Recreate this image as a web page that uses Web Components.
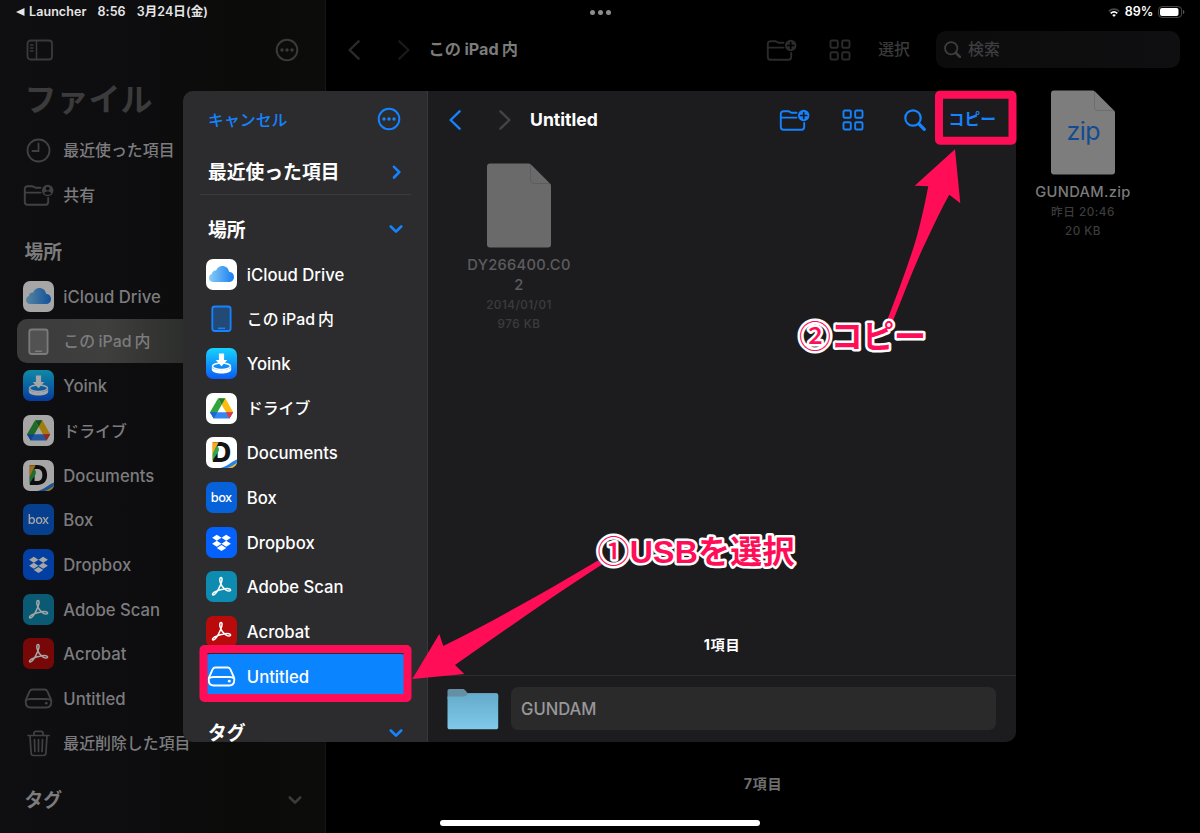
<!DOCTYPE html>
<html lang="ja">
<head>
<meta charset="utf-8">
<title>ファイル</title>
<style>
	body
	{
		margin: 0;
		background: #000;
		font-family: Inter, "Noto Sans CJK JP", sans-serif;
		line-height: 1.25;
		-webkit-font-smoothing: antialiased;
	}
</style>
</head>
<body>

<files-app>
	<status-bar slot="status"></status-bar>

	<side-bar slot="sidebar">
		<side-row icon="clock" kana>最近使った項目</side-row>
		<side-row icon="shared" kana>共有</side-row>
		<side-header>場所</side-header>
		<side-row icon="icloud">iCloud Drive</side-row>
		<side-row icon="ipad" kana selected>この<mixed-text>iPad</mixed-text>内</side-row>
		<side-row icon="yoink">Yoink</side-row>
		<side-row icon="drive" kana>ドライブ</side-row>
		<side-row icon="documents">Documents</side-row>
		<side-row icon="box">Box</side-row>
		<side-row icon="dropbox">Dropbox</side-row>
		<side-row icon="scan">Adobe Scan</side-row>
		<side-row icon="acrobat">Acrobat</side-row>
		<side-row icon="disk">Untitled</side-row>
		<side-row icon="trash" kana>最近削除した項目</side-row>
		<side-header chevron="down">タグ</side-header>
	</side-bar>

	<file-browser slot="main"></file-browser>

	<save-dialog slot="dialog">
		<side-header slot="places" class="recent" chevron="right">最近使った項目</side-header>
		<side-header slot="places" chevron="down">場所</side-header>
		<side-row slot="places" icon="icloud">iCloud Drive</side-row>
		<side-row slot="places" icon="ipad" kana>この<mixed-text>iPad</mixed-text>内</side-row>
		<side-row slot="places" icon="yoink">Yoink</side-row>
		<side-row slot="places" icon="drive" kana>ドライブ</side-row>
		<side-row slot="places" icon="documents">Documents</side-row>
		<side-row slot="places" icon="box">Box</side-row>
		<side-row slot="places" icon="dropbox">Dropbox</side-row>
		<side-row slot="places" icon="scan">Adobe Scan</side-row>
		<side-row slot="places" icon="acrobat">Acrobat</side-row>
		<side-row slot="places" icon="disk" selected>Untitled</side-row>
		<side-header slot="places" chevron="down">タグ</side-header>
	</save-dialog>

	<guide-marks slot="marks"></guide-marks>
</files-app>

<script>
const acrobatMark = `
	<g fill="none" stroke="#fff" stroke-width="1.5" stroke-linejoin="round" stroke-linecap="round">
		<path d="M15 6.6c-1.3 0-1.5 2-.9 4.200.9 3.300 3.500 6.700 6 8.300 2.200 1.400 4.600 1.200 4.500-.1-.1-1.300-2.600-1.700-5.600-1.300-3.700.5-7.600 1.700-10.300 3.200-1.900 1.100-2.700 2.500-1.800 3 1.200.7 3.500-1.900 5.300-5.300 1.700-3.200 3.500-7.300 3.800-9.500.2-1.500-.1-2.500-1-2.500z"/>
	</g>`;

const folderPlus = badge => `
	<g fill="none" stroke="currentColor" stroke-width="1.9" stroke-linejoin="round" stroke-linecap="round">
		<path d="M17.500 4.800H12.800c-1.400 0-1.900-1.500-3.500-1.500H4.500C2.800 3.300 1.800 4.300 1.800 6v13c0 1.700 1 2.700 2.700 2.700h18c1.700 0 2.700-1 2.700-2.700v-4M2 9.600h15.500"/>
	</g>
	<circle cx="24.700" cy="7.500" r="5.700" fill="currentColor"/>${badge}`;

// [width, height, body] for every symbol the page draws
const ICONS = {
	panel: [28, 22, `<g fill="none" stroke="currentColor" stroke-width="1.800"><rect x="1.500" y="1.500" width="24.500" height="19" rx="3"/><path d="M10.500 1.500v19M4 6h3.500M4 9h3.500M4 12h3.500" stroke-width="1.500"/></g>`],
	more: [24, 24, `<circle cx="12" cy="12" r="10.300" fill="none" stroke="currentColor" stroke-width="2"/><g fill="currentColor"><circle cx="7" cy="12" r="1.700"/><circle cx="12" cy="12" r="1.700"/><circle cx="17" cy="12" r="1.700"/></g>`],
	clock: [31, 31, `<g fill="none" stroke="currentColor" stroke-width="1.800" stroke-linecap="round"><circle cx="15.500" cy="15.500" r="11"/><path d="M15.500 8.500v7.500H9.500"/></g>`],
	shared: [31, 31, `<g transform="translate(0 3)">${folderPlus(`<circle cx="24.700" cy="5.600" r="1.900" fill="#0d0d0e"/><path d="M21.200 10.300c.6-2.500 6.400-2.500 7 0-1.800 2-5.200 2-7 0z" fill="#0d0d0e"/>`)}</g>`],
	folderplus: [31, 24, folderPlus(`<path d="M24.700 4.500v6M21.700 7.500h6" stroke="var(--badge-ink, #1c1c1e)" stroke-width="1.700" stroke-linecap="round"/>`)],
	grid: [22, 22, `<g fill="none" stroke="currentColor" stroke-width="1.900"><rect x="1.500" y="1.500" width="7.300" height="7.300" rx="1.300"/><rect x="13.200" y="1.500" width="7.300" height="7.300" rx="1.300"/><rect x="1.500" y="13.200" width="7.300" height="7.300" rx="1.300"/><rect x="13.200" y="13.200" width="7.300" height="7.300" rx="1.300"/></g>`],
	search: [22, 22, `<g fill="none" stroke="currentColor" stroke-linecap="round"><circle cx="9" cy="9" r="7.700" stroke-width="2.200"/><path d="M15 15l5.300 5.300" stroke-width="3.200"/></g>`],
	back: [12, 20, `<path d="M10.600 1.300L1.600 10l9 8.700" fill="none" stroke="currentColor" stroke-width="2.400" stroke-linecap="round" stroke-linejoin="round"/>`],
	forward: [12, 20, `<path d="M1.400 1.300l9 8.700-9 8.700" fill="none" stroke="currentColor" stroke-width="2.400" stroke-linecap="round" stroke-linejoin="round"/>`],
	right: [14, 14, `<path d="M5 1.800l5.300 5.400L5 12.500" fill="none" stroke="currentColor" stroke-width="2.600" stroke-linecap="round" stroke-linejoin="round"/>`],
	down: [14, 14, `<path d="M1.800 4.500L7 9.700l5.200-5.200" fill="none" stroke="currentColor" stroke-width="2.600" stroke-linecap="round" stroke-linejoin="round"/>`],
	trash: [31, 31, `<g fill="none" stroke="currentColor" stroke-width="1.700" stroke-linecap="round" stroke-linejoin="round"><path d="M5 7.500h21M11 7V5.200C11 4 11.700 3.300 13 3.300h5c1.300 0 2 .7 2 1.900V7M7 8l1.100 17c.1 1.600 1 2.500 2.500 2.500h9.800c1.500 0 2.400-.9 2.500-2.500L24 8M11.500 11.500l.4 12M15.500 11.500v12M19.500 11.500l-.4 12"/></g>`],
	disk: [31, 31, `<g fill="none" stroke="currentColor" stroke-width="1.900" stroke-linejoin="round"><path d="M9.500 6.500h12c1.400 0 2.300.6 2.900 1.800l3.300 7.500c.4.900.6 1.800.6 2.700 0 4-1.800 6-5 6h-15.600c-3.200 0-5-2-5-6 0-.9.200-1.800.6-2.700l3.300-7.500c.6-1.200 1.500-1.800 2.900-1.800z"/><path d="M3 17.300c1-.9 2.500-1.300 4.500-1.300h16c2 0 3.500.4 4.500 1.300"/></g><circle cx="23.300" cy="20.200" r="1.400" fill="currentColor"/>`],
	ipad: [31, 31, `<rect x="6.300" y="3.500" width="18.300" height="24.500" rx="2.500" fill="currentColor" fill-opacity=".35" stroke="currentColor" stroke-width="1.800"/><path d="M12 25.300h7" stroke="currentColor" stroke-width="1.500"/>`],
	icloud: [31, 31, `
		<linearGradient id="c" x1="0" x2="1"><stop offset="0" stop-color="#87cdf6"/><stop offset="1" stop-color="#1a7df0"/></linearGradient>
		<rect width="31" height="31" rx="7" fill="#fff"/>
		<path d="M7.500 23C5 23 3 21.300 3 18.900c0-2 1.200-3.400 2.900-3.900.2-2.300 2-3.800 4.200-3.500C11.200 8.700 13.500 7 16.300 7c3.600 0 6.300 2.400 6.700 5.800 3 .2 5 2.300 5 5.200 0 3-2.200 5-5.200 5z" fill="url(#c)"/>`],
	yoink: [31, 31, `
		<linearGradient id="y" x2="0" y2="1"><stop offset="0" stop-color="#17d3fe"/><stop offset="1" stop-color="#0a5cf5"/></linearGradient>
		<rect width="31" height="31" rx="7" fill="url(#y)"/>
		<ellipse cx="15.500" cy="18.200" rx="9" ry="3.200" fill="none" stroke="#fff" stroke-width="1.500"/>
		<path d="M5.800 19v2.500c0 5.300 19.400 5.300 19.400 0V19c-1.500 4.200-17.900 4.200-19.400 0z" fill="#fff"/>
		<path d="M12.900 5.500h5.200v6.500h3.200l-5.800 6.200L9.700 12h3.200z" fill="#fff"/>`],
	drive: [31, 31, `
		<rect width="31" height="31" rx="7" fill="#fff"/>
		<path d="M12.100 5.200L4 19.300l3.800 6.200L15.700 11.700z" fill="#2fa53c"/>
		<path d="M12.100 5.200h7.200L27.200 19.300H20z" fill="#fbbd10"/>
		<path d="M12.100 5.200h7.200l-3.600 6.500z" fill="#188038"/>
		<path d="M4 19.300h23.200l-3.700 6.200H7.800z" fill="#3586ef"/>
		<path d="M20 19.300h7.200l-3.700 6.200z" fill="#ea3535"/>
		<path d="M4 19.300h7.300l-3.500 6.200z" fill="#1967d2"/>`],
	documents: [31, 31, `
		<clipPath id="d"><rect width="31" height="31" rx="7"/></clipPath>
		<rect width="31" height="31" rx="7" fill="#fff"/>
		<text x="5.300" y="24.700" font-family="Inter" font-weight="800" font-size="26.500" textLength="20" lengthAdjust="spacingAndGlyphs" fill="#141414">D</text>
		<g clip-path="url(#d)">
			<path d="M6.600 5.200h6L9.500 12 6.600 18z" fill="#fca626"/>
			<path d="M10.600 8.500l2.200 2.500v3L6.600 23.500V17z" fill="#2fa84a"/>
			<path d="M14.500 31c7-1.500 10.500-6.500 16.500-8.500V31z" fill="#2481e8"/>
			<path d="M21.500 31c4-1 6-3.300 9.500-5v5z" fill="#fbb420"/>
		</g>`],
	box: [31, 31, `<rect width="31" height="31" rx="7" fill="#0761d9"/><text x="15.500" y="20" text-anchor="middle" font-family="Inter" font-weight="500" font-size="12.800" textLength="21.500" fill="#fff">box</text>`],
	dropbox: [31, 31, `<rect width="31" height="31" rx="7" fill="#0561fb"/><path d="M10.800 7.800l4.700 3-4.700 3-4.700-3zM20.200 7.800l4.700 3-4.700 3-4.700-3zM10.800 13.800l4.700 3-4.700 3-4.700-3zM20.200 13.800l4.700 3-4.700 3-4.700-3zM15.500 17.900l4.700 3-4.700 3-4.700-3z" fill="#fff"/>`],
	scan: [31, 31, `<rect width="31" height="31" rx="7" fill="#0e8bb0"/>${acrobatMark}`],
	acrobat: [31, 31, `<rect width="31" height="31" rx="7" fill="#b90b0b"/>${acrobatMark}`],
	folder: [52, 42, `
		<linearGradient id="f" x2="0" y2="1"><stop offset="0" stop-color="#65abcb"/><stop offset="1" stop-color="#80c9e8"/></linearGradient>
		<path d="M.5 9V3C.5 1.700 1.200 1 2.500 1h13c1.200 0 1.900.4 2.700 1.300L20.500 5H49c1.500 0 2.200.7 2.200 2v4H.5z" fill="#648fa5"/>
		<path d="M.5 8.500H17c2.300 0 3-3 5.500-3H49c1.500 0 2.200.7 2.200 2V39c0 1.500-.7 2.300-2.200 2.300H2.700C1.200 41.300.5 40.500.5 39z" fill="url(#f)"/>`],
};

function define(name, html, setup)
{
	const template = document.createElement("template");
	template.innerHTML = html.trim();

	customElements.define(name, class extends HTMLElement
	{
		constructor()
		{
			super();
			this.attachShadow({ mode: "open" });
			this.shadowRoot.appendChild(template.content.cloneNode(true));
		}

		connectedCallback()
		{
			if (setup) setup(this, this.shadowRoot);
		}
	});
}

define("ui-icon", `
	<style>
		:host { display: block; flex: none; }
		svg { display: block; }
	</style>
	<svg></svg>
`, (host, root) =>
{
	const [width, height, body] = ICONS[host.getAttribute("name")];
	const svg = root.querySelector("svg");
	const scale = Number(host.getAttribute("scale") || 1);
	svg.setAttribute("viewBox", `0 0 ${width} ${height}`);
	svg.setAttribute("width", width * scale);
	svg.setAttribute("height", height * scale);
	svg.innerHTML = body;
});

// Latin run inside Japanese text; no whitespace round the slot, it is inline
define("mixed-text", `
	<style>
		:host { display: inline; margin: 0 3px 0 3.5px; }
	</style><slot></slot>
`);

define("side-row", `
	<style>
		:host
		{
			display: flex;
			align-items: center;
			gap: 9.5px;
			box-sizing: border-box;
			height: 44.7px;
			padding-left: 6.3px;
			border-radius: 10px;
			font-size: 16.7px;
			font-weight: 500;
			white-space: nowrap;
			color: var(--row-ink);
		}

		:host([kana]) { font-size: 15.9px; }
		:host([selected]) { background: var(--row-selected); }

		.icon
		{
			color: var(--row-tint);
			filter: var(--row-filter, none);
		}

		.label { padding-top: 2px; }
		:host([selected]) .icon { color: var(--row-selected-tint); }
	</style>
	<div class="icon"></div>
	<div class="label"><slot></slot></div>
`, (host, root) =>
{
	root.querySelector(".icon").innerHTML = `<ui-icon name="${host.getAttribute("icon")}"></ui-icon>`;
});

define("side-header", `
	<style>
		:host
		{
			display: flex;
			justify-content: space-between;
			align-items: center;
			height: 44.7px;
			padding: 12px 8px 0 8px;
			font-size: 18.8px;
			font-weight: 700;
			color: var(--header-ink);
		}

		.label { padding-top: 2px; }
		.chevron { color: var(--chevron-ink); }
	</style>
	<div class="label"><slot></slot></div>
	<div class="chevron"></div>
`, (host, root) =>
{
	if (!host.hasAttribute("chevron")) return;
	root.querySelector(".chevron").innerHTML = `<ui-icon name="${host.getAttribute("chevron")}"></ui-icon>`;
});

define("side-bar", `
	<style>
		:host
		{
			--row-ink: #7c7c7e;
			--row-tint: #414143;
			--row-selected: linear-gradient(90deg, #3b3b3c, #3f3f3e 30%, #2b2d2a 60%);
			--row-selected-tint: #7b7b7b;
			--header-ink: #7c7c7d;
			--chevron-ink: #3b3b3c;
			display: block;
			box-sizing: border-box;
			height: 833px;
			padding: 24px 15.5px 0 16.5px;
			border-right: 1px solid #161618;
			background: linear-gradient(90deg, #0f0f11, #0d0d0f 45%, #0b0b09 75%, #0c0c0a);
		}

		.tools
		{
			display: flex;
			justify-content: space-between;
			align-items: center;
			height: 51px;
			padding: 0 10.7px 0 9.3px;
			color: #3a3a3c;
		}

		h1
		{
			height: 53px;
			margin: 0 0 0 8px;
			font-size: 32px;
			line-height: 49px;
			font-weight: 700;
			color: #3b3b3c;
		}

		::slotted(side-row[icon]) { --row-filter: brightness(var(--dim, 1)); }
		::slotted(side-row[icon=icloud]), ::slotted(side-row[icon=drive]), ::slotted(side-row[icon=documents]),
		::slotted(side-row[icon=yoink]), ::slotted(side-row[icon=box]), ::slotted(side-row[icon=dropbox]),
		::slotted(side-row[icon=scan]), ::slotted(side-row[icon=acrobat]) { --dim: 0.65; }
	</style>
	<div class="tools">
		<ui-icon name="panel"></ui-icon>
		<ui-icon name="more"></ui-icon>
	</div>
	<h1>ファイル</h1>
	<slot></slot>
`);

define("status-bar", `
	<style>
		:host
		{
			display: grid;
			grid-template-columns: 1fr auto 1fr;
			align-items: center;
			box-sizing: border-box;
			height: 24px;
			padding: 0 15.5px 0 16px;
			font-size: 12.5px;
			font-weight: 600;
			color: #e6e6e6;
		}

		.left, .right { display: flex; align-items: center; }
		.left { gap: 11px; letter-spacing: 0.08px; }
		.left span:first-of-type { margin-left: -7px; }
		.right { justify-content: flex-end; gap: 4px; color: #fff; letter-spacing: 0.1px; }
		.wifi { margin-right: 1px; }
		.dots { display: flex; gap: 3px; }
		.dots i { width: 5px; height: 5px; border-radius: 50%; background: #8c8c8c; }
		svg { display: block; }
	</style>
	<div class="left">
		<svg width="9" height="8"><path d="M8.500 0v8L0 4z" fill="#e6e6e6"/></svg>
		<span>Launcher</span>
		<span>8:56</span>
		<span>3月24日(金)</span>
	</div>
	<div class="dots"><i></i><i></i><i></i></div>
	<div class="right">
		<svg class="wifi" width="12" height="9" viewBox="0 0 12 9" fill="none" stroke-width="1.700">
			<path d="M.8 3.300C3.800.4 8.200.4 11.200 3.300" stroke="#444"/>
			<path d="M2.700 5.300c2-1.800 4.600-1.800 6.600 0" stroke="#fff"/>
			<path d="M6 8.900L4.200 7c1-.9 2.600-.9 3.600 0z" fill="#fff"/>
		</svg>
		<span>89%</span>
		<svg width="27" height="12" viewBox="0 0 27 12">
			<rect x=".6" y=".6" width="23" height="10.800" rx="3.300" fill="none" stroke="#4b4b4b"/>
			<rect x="2" y="2" width="18.500" height="8" rx="2" fill="#fff"/>
			<path d="M25 4c1.800.5 1.800 3.500 0 4z" fill="#5a5a5a"/>
		</svg>
	</div>
`);

define("file-item", `
	<style>
		:host
		{
			display: flex;
			flex-direction: column;
			align-items: center;
			width: 110px;
			text-align: center;
			font-weight: 500;
			color: var(--name-ink);
		}

		svg { display: block; }
		.name { margin-top: 7px; font-size: 14.7px; line-height: 20px; letter-spacing: 0.3px; }
		.meta { font-size: 11.7px; line-height: 19px; letter-spacing: 0.5px; color: var(--meta-ink); }
		.name + .meta { margin-top: 0.5px; }
	</style>
	<svg width="64" height="85" viewBox="0 0 64 85">
		<path d="M3 .5h38.500c1 0 1.800.3 2.500 1L63 20.500c.7.700 1 1.400 1 2.500v58.500c0 2-1 3-3 3H3c-2 0-3-1-3-3v-78c0-2 1-3 3-3z" fill="var(--page)"/>
		<path d="M43.500 1v15.500c0 2.500 1.300 4 4 4H63" fill="none" stroke="#000" stroke-opacity=".12"/>
		<text x="32.500" y="50" text-anchor="middle" font-size="25" font-weight="400" textLength="34" fill="#134b91"></text>
	</svg>
	<div class="name"><slot></slot></div>
	<div class="meta"><slot name="date"></slot></div>
	<div class="meta"><slot name="size"></slot></div>
`, (host, root) =>
{
	const text = root.querySelector("text");
	if (host.hasAttribute("kind")) text.textContent = host.getAttribute("kind");
	else text.remove();
});

define("file-browser", `
	<style>
		:host
		{
			--badge-ink: #000;
			--page: #7d7d7d;
			--name-ink: #7b7b7b;
			--meta-ink: #3c3c3c;
			display: flex;
			flex-direction: column;
			box-sizing: border-box;
			height: 833px;
			padding-top: 24px;
		}

		header
		{
			display: flex;
			align-items: center;
			height: 51px;
			padding: 0 20.5px 0 21.5px;
			font-size: 15.9px;
			color: #2b2b2b;
		}

		.forward { margin-left: 38px; color: #191919; }
		.title { flex: 1; margin-left: 19px; font-size: 16.2px; font-weight: 700; color: #7b7b7b; }
		.grid { margin: 0 27px 0 32px; }
		.select { font-weight: 500; color: #3a3a3a; }

		.search
		{
			display: flex;
			align-items: center;
			gap: 7px;
			box-sizing: border-box;
			width: 243.5px;
			height: 37px;
			margin-left: 26px;
			padding-left: 7.5px;
			border-radius: 10px;
			background: linear-gradient(90deg, #0c0c0c, #0f0f11);
			font-weight: 500;
			color: #3e3e40;
		}

		.files { display: flex; flex: 1; justify-content: flex-end; padding: 15px 62px 0 0; }

		footer
		{
			padding-bottom: 38px;
			font-size: 14.2px;
			font-weight: 700;
			line-height: 22px;
			text-align: center;
			letter-spacing: 0.7px;
			color: #6f6f6f;
		}
	</style>
	<header>
		<ui-icon name="back"></ui-icon>
		<ui-icon class="forward" name="forward"></ui-icon>
		<div class="title">この<mixed-text>iPad</mixed-text>内</div>
		<ui-icon name="folderplus"></ui-icon>
		<ui-icon class="grid" name="grid"></ui-icon>
		<div class="select">選択</div>
		<div class="search"><ui-icon name="search" scale="0.8"></ui-icon><span>検索</span></div>
	</header>
	<div class="files">
		<file-item kind="zip">GUNDAM.zip<span slot="date">昨日 20:46</span><span slot="size">20 KB</span></file-item>
	</div>
	<footer>7項目</footer>
`);

define("save-dialog", `
	<style>
		:host
		{
			display: grid;
			grid-template-columns: 245px 1fr;
			width: 833px;
			height: 650.5px;
			border-radius: 10px;
			overflow: hidden;
			background: #1c1c1e;
			color: #fff;
		}

		.places
		{
			--row-ink: #fff;
			--row-tint: #1583ff;
			--row-selected: #0b84ff;
			--row-selected-tint: #fff;
			--header-ink: #fff;
			--chevron-ink: #1583ff;
			box-sizing: border-box;
			padding: 0 16px 0 17px;
			overflow: hidden;
			background: #2c2c2e;
			border-right: 1px solid #38383a;
		}

		.top
		{
			display: flex;
			justify-content: space-between;
			align-items: center;
			height: 56px;
			padding: 0 10px 0 8px;
			font-size: 15.9px;
			font-weight: 500;
			color: #1583ff;
		}

		.cancel { padding-top: 3px; }

		::slotted(.recent)
		{
			height: 45px;
			padding-top: 2px;
			border-bottom: 1px solid #3a3a3c;
		}

		.content { display: flex; flex-direction: column; min-width: 0; }

		header
		{
			display: flex;
			align-items: center;
			height: 57px;
			padding: 0 20px 0 21px;
			font-size: 15.8px;
			color: #1583ff;
		}

		.forward { margin-left: 38px; color: #444446; }
		.title { flex: 1; margin-left: 19px; font-size: 17.6px; font-weight: 700; color: #fff; }
		.grid { margin: 0 40px 0 32px; }
		.copy { margin-left: 22.5px; font-weight: 600; }

		.files
		{
			--page: #6a6a6b;
			--name-ink: #5c5c5e;
			--meta-ink: #3c3c3e;
			display: flex;
			flex: 1;
			align-items: flex-start;
			padding: 15px 0 0 36px;
		}

		.count
		{
			font-size: 14.2px;
			font-weight: 700;
			line-height: 22px;
			text-align: center;
			letter-spacing: 0.7px;
			padding-bottom: 18.5px;
		}

		.name
		{
			display: flex;
			align-items: center;
			gap: 12px;
			box-sizing: border-box;
			height: 67px;
			padding: 0 20px 0 19px;
			border-top: 1px solid #2d2d2f;
		}

		.field
		{
			flex: 1;
			height: 43px;
			padding-left: 10px;
			border-radius: 7px;
			background: #2a2a2b;
			font-size: 16.6px;
			line-height: 44.5px;
			font-weight: 500;
			color: #98989a;
		}
	</style>
	<div class="places">
		<div class="top"><span class="cancel">キャンセル</span><ui-icon name="more"></ui-icon></div>
		<slot name="places"></slot>
	</div>
	<div class="content">
		<header>
			<ui-icon name="back"></ui-icon>
			<ui-icon class="forward" name="forward"></ui-icon>
			<div class="title">Untitled</div>
			<ui-icon name="folderplus"></ui-icon>
			<ui-icon class="grid" name="grid"></ui-icon>
			<ui-icon name="search"></ui-icon>
			<div class="copy">コピー</div>
		</header>
		<div class="files">
			<file-item>DY266400.C0<br>2<span slot="date">2014/01/01</span><span slot="size">976 KB</span></file-item>
		</div>
		<div class="count">1項目</div>
		<div class="name">
			<ui-icon name="folder"></ui-icon>
			<div class="field">GUNDAM</div>
		</div>
	</div>
`);

// Frames, arrows and captions drawn over the whole screen
define("guide-marks", `
	<style>
		:host { display: block; }
		svg { display: block; }
		rect { fill: none; stroke: #ff0d57; stroke-width: 8; stroke-linejoin: round; }
		path { fill: #ff0d57; }

		text
		{
			font: 700 32px "Liberation Sans", "Noto Sans CJK JP", sans-serif;
			fill: #ff0d57;
			stroke: #fff;
			stroke-width: 5;
			stroke-linejoin: round;
			paint-order: stroke;
		}

		.number { font-family: "Noto Sans CJK JP", sans-serif; font-weight: 500; }
	</style>
	<svg width="1200" height="833" viewBox="0 0 1200 833">
		<rect x="203.500" y="649" width="204" height="49" rx="1"/>
		<rect x="939" y="94.700" width="73.500" height="46" rx="1"/>
		<path d="M412.300 679L439.300 634l4 12C490 623 545 592 598 560.500l4 4C545 601 497 636 455 665l9.300 9z"/>
		<path d="M955 149.300L914.700 185.700l13.600.6C923 213 918 235 911.700 253c-8 24-16 45-24.400 67l6 0C904 294 914 266 926.700 240c8-17 15-32 22.600-45.300l11 8.600z"/>
		<text x="597.500" y="563" textLength="197"><tspan class="number">①</tspan>USBを選択</text>
		<text x="799" y="347.500" textLength="127"><tspan class="number">②</tspan>コピー</text>
	</svg>
`);

define("files-app", `
	<style>
		:host
		{
			display: grid;
			grid-template-columns: 326px 1fr;
			position: relative;
			width: 1200px;
			height: 833px;
			overflow: hidden;
			background: #000;
		}

		.status, .marks { position: absolute; top: 0; left: 0; width: 1200px; }
		.dialog { position: absolute; top: 91px; left: 183px; }

		.home
		{
			position: absolute;
			left: 440px;
			top: 820px;
			width: 320px;
			height: 5.5px;
			border-radius: 3px;
			background: #fff;
		}
	</style>
	<slot name="sidebar"></slot>
	<slot name="main"></slot>
	<div class="status"><slot name="status"></slot></div>
	<div class="dialog"><slot name="dialog"></slot></div>
	<div class="marks"><slot name="marks"></slot></div>
	<div class="home"></div>
`);
</script>
</body>
</html>
